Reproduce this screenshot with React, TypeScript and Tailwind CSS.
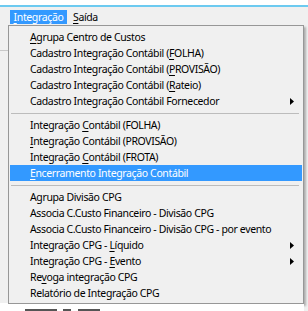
import React from "react";

type Item =
  | { sep: true }
  | { sep?: false; pre: string; u?: string; post?: string; sub?: boolean; active?: boolean };

const items: Item[] = [
  { pre: "", u: "A", post: "grupa Centro de Custos" },
  { pre: "Cadastro Integração Contábil (", u: "F", post: "OLHA)" },
  { pre: "Cadastro Integração Contábil (", u: "P", post: "ROVISÃO)" },
  { pre: "Cadastro Integração Contábil (", u: "R", post: "ateio)" },
  { pre: "Cadastro Integração Contábil Fornecedor", sub: true },
  { sep: true },
  { pre: "Integração ", u: "C", post: "ontábil (FOLHA)" },
  { pre: "", u: "I", post: "ntegração Contábil (PROVISÃO)" },
  { pre: "Integração ", u: "C", post: "ontábil (FROTA)" },
  { pre: "", u: "E", post: "ncerramento Integração Contábil", active: true },
  { sep: true },
  { pre: "Agrupa Divisão CPG" },
  { pre: "Associa C.Custo Financeiro - Divisão CPG" },
  { pre: "Associa C.Custo Financeiro - Divisão CPG - por evento" },
  { pre: "Integração CPG - ", u: "L", post: "íquido", sub: true },
  { pre: "Integração CPG - ", u: "E", post: "vento", sub: true },
  { pre: "Re", u: "v", post: "oga integração CPG" },
  { pre: "Relatório de Integração CPG" },
];

function Arrow({ white }: { white?: boolean }) {
  return (
    <svg width="4" height="7" viewBox="0 0 4 7" className="shrink-0">
      <path d="M0 0 L4 3.5 L0 7 Z" fill={white ? "#ffffff" : "#000000"} />
    </svg>
  );
}

export default function App() {
  return (
    <div
      className="w-[308px] h-[311px] bg-white overflow-hidden flex flex-col text-[10.5px] leading-none text-[#000] tracking-[-0.37px]"
      style={{ fontFamily: '"Noto Sans", "Open Sans", sans-serif' }}
    >
      <div className="h-[5px] bg-white" />
      <div className="h-[2px] bg-[#6ccaf0]" />
      {/* menu bar */}
      <div className="h-[18px] bg-[#f0f0f0] flex items-end pl-[10px]">
        <div className="h-[14px] w-[57px] bg-[#3399ff] text-white flex items-center justify-center mb-[1px]">
          <span className="underline underline-offset-[2px]">I</span>ntegração
        </div>
        <div className="h-[14px] flex items-center pl-[6px] mb-[1px]">
          <span className="underline underline-offset-[2px]">S</span>aída
        </div>
      </div>
      {/* underlying window area + dropdown */}
      <div className="flex flex-1 bg-[#f0f0f0]">
        <div className="w-[8px] flex flex-col">
          <div className="h-[25px]" />
          <div className="h-[1px] bg-[#c8c8c8]" />
          <div className="flex-1" />
          <div className="h-[8px] bg-white" />
        </div>
        <div className="flex flex-col">
          <div
            className="w-[296px] h-[279px] border border-[#979797] bg-[#f0f0f0] pt-[3px] pb-[2px] px-[1px] flex flex-col"
            style={{ boxShadow: "2px 2px 2px rgba(0,0,0,0.28)" }}
          >
            {items.map((it, i) =>
              it.sep ? (
                <div key={i} className="h-[8px] flex items-center pl-[1px] pr-[3px]">
                  <div className="h-[1px] w-full bg-[#bcbcbc]" />
                </div>
              ) : (
                <div
                  key={i}
                  className={
                    "h-[16px] flex items-center pl-[20px] pr-[8px] " +
                    (it.active ? "bg-[#3399ff] text-white" : "")
                  }
                >
                  <span className="flex-1 whitespace-nowrap">
                    {it.pre}
                    {it.u && <span className="underline underline-offset-[2px]">{it.u}</span>}
                    {it.post}
                  </span>
                  {it.sub && <Arrow white={it.active} />}
                </div>
              )
            )}
          </div>
          <div className="flex-1 bg-white relative">
            <div className="absolute left-[17px] bottom-0 h-[2px] w-[32px] bg-[#555]" />
            <div className="absolute left-[55px] bottom-0 h-[2px] w-[8px] bg-[#555]" />
            <div className="absolute left-[70px] bottom-0 h-[2px] w-[22px] bg-[#555]" />
          </div>
        </div>
      </div>
    </div>
  );
}
